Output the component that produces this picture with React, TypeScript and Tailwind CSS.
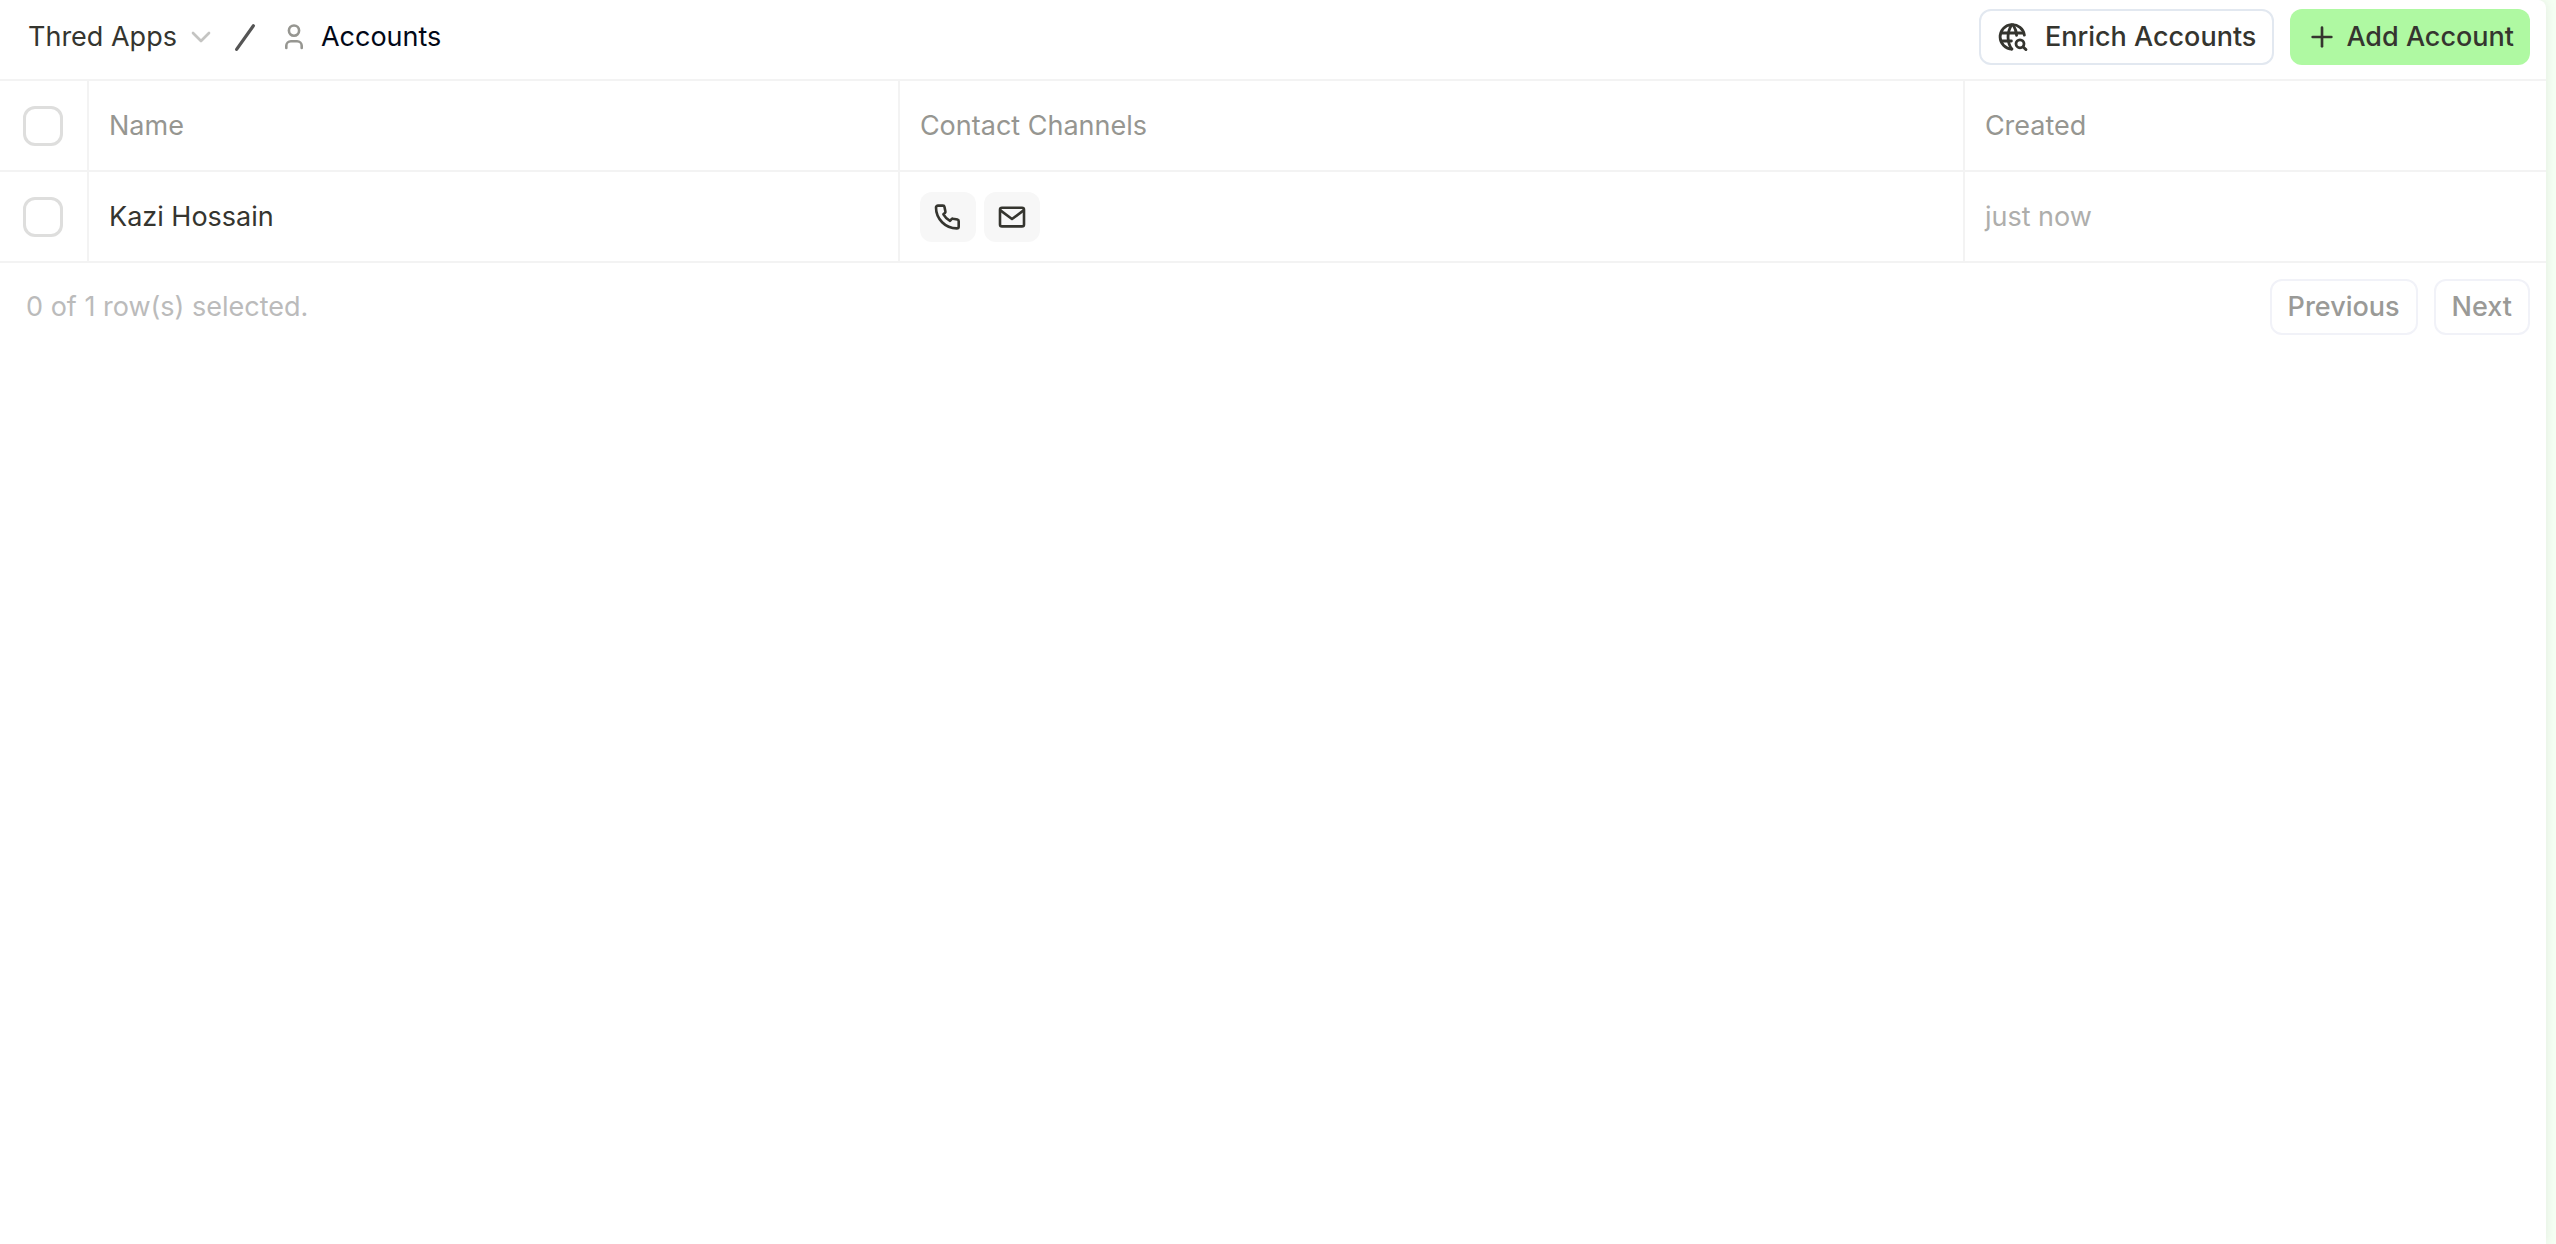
import type { ReactNode } from "react";
import { ChevronDown, Plus } from "lucide-react";

interface Account {
  id: number;
  name: string;
  created: string;
}

const accounts: Account[] = [{ id: 1, name: "Kazi Hossain", created: "just now" }];

export default function App() {
  return (
    <div className="min-h-screen bg-[#f5fff3] pr-[10px] font-['Inter',sans-serif] text-[27px] leading-[40px] text-[#35352f]">
      <main className="min-h-screen rounded-tr-lg bg-white shadow-[0_0_12px_rgba(0,0,0,0.08)]">
        <Header />
        <AccountsTable />
        <Pagination />
      </main>
    </div>
  );
}

function Header() {
  return (
    <header className="flex items-center justify-between pt-[9px] pr-4 pb-[14px] pl-7">
      <nav aria-label="Breadcrumb" className="flex items-center">
        <button type="button" className="flex items-center gap-2">
          Thred Apps
          <ChevronDown className="size-8 text-[#c4c4c2]" strokeWidth={2} />
        </button>
        <SlashIcon />
        <a href="#accounts" className="flex items-center gap-4 text-[#020817]">
          <PersonIcon />
          Accounts
        </a>
      </nav>
      <div className="flex items-center gap-4">
        <button
          type="button"
          className="flex h-14 items-center gap-4 rounded-xl border-2 border-slate-200 px-4 font-medium"
        >
          <GlobeSearchIcon />
          Enrich Accounts
        </button>
        <button
          type="button"
          className="flex h-14 items-center gap-2 rounded-xl bg-[#aff9a2] px-4 font-medium"
        >
          <Plus className="size-8" strokeWidth={2} />
          Add Account
        </button>
      </div>
    </header>
  );
}

function AccountsTable() {
  return (
    <table className="w-full table-fixed border-y-2 border-[#f3f3f3] text-left">
      <thead>
        <tr className="h-[91px] border-b-2 border-[#f3f3f3] text-[#969691]">
          <th className="w-[88px] border-r-2 border-[#f3f3f3] pl-[23px]">
            <Checkbox label="Select all" />
          </th>
          <th className="w-[31.85%] border-r-2 border-[#f3f3f3] px-5 font-normal">Name</th>
          <th className="w-[41.83%] border-r-2 border-[#f3f3f3] px-5 font-normal">
            Contact Channels
          </th>
          <th className="px-5 font-normal">Created</th>
        </tr>
      </thead>
      <tbody>
        {accounts.map((account) => (
          <tr key={account.id} className="h-[91px]">
            <td className="border-r-2 border-[#f3f3f3] pl-[23px]">
              <Checkbox label={`Select ${account.name}`} />
            </td>
            <td className="border-r-2 border-[#f3f3f3] px-5">{account.name}</td>
            <td className="border-r-2 border-[#f3f3f3] px-5">
              <div className="flex gap-2">
                <ChannelButton label="Phone">
                  <PhoneIcon />
                </ChannelButton>
                <ChannelButton label="Email">
                  <MailIcon />
                </ChannelButton>
              </div>
            </td>
            <td className="px-5 text-[#aeaeac]">{account.created}</td>
          </tr>
        ))}
      </tbody>
    </table>
  );
}

function Pagination() {
  return (
    <footer className="flex items-center justify-between py-4 pr-4 pl-[26px]">
      <p className="text-[#bbbbbb]">0 of {accounts.length} row(s) selected.</p>
      <div className="flex gap-4">
        <PageButton>Previous</PageButton>
        <PageButton>Next</PageButton>
      </div>
    </footer>
  );
}

function Checkbox({ label }: { label: string }) {
  return (
    <input
      type="checkbox"
      aria-label={label}
      className="block size-10 appearance-none rounded-xl border-3 border-[#dededd] bg-white checked:bg-[#aff9a2]"
    />
  );
}

function ChannelButton({ label, children }: { label: string; children: ReactNode }) {
  return (
    <button
      type="button"
      aria-label={label}
      className="flex h-[50px] w-14 items-center justify-center rounded-xl bg-[#f7f7f7]"
    >
      {children}
    </button>
  );
}

function PageButton({ children }: { children: ReactNode }) {
  return (
    <button
      type="button"
      disabled
      className="h-14 rounded-xl border-2 border-[#f1f2f8] px-4 font-medium text-[#9a9a97]"
    >
      {children}
    </button>
  );
}

// ---------------------------------------------------------------------------

function SlashIcon() {
  return (
    <svg viewBox="0 0 24 32" className="mr-6 ml-4 h-8 w-6" fill="none" stroke="#555555" strokeWidth={3.2} strokeLinecap="round">
      <path d="M3.6 28.4 20.4 4.8" />
    </svg>
  );
}

function PersonIcon() {
  return (
    <svg viewBox="0 0 24 32" className="h-8 w-6" fill="none" stroke="#969691" strokeWidth={2.6} strokeLinecap="round">
      <circle cx="13" cy="9.6" r="5.1" />
      <path d="M5.3 27v-2.2a4.6 4.6 0 0 1 4.6-4.6h6.2a4.6 4.6 0 0 1 4.6 4.6V27" />
    </svg>
  );
}

function GlobeSearchIcon() {
  return (
    <svg viewBox="0 0 32 32" className="size-8" fill="none" stroke="currentColor" strokeWidth={2.8} strokeLinecap="round" strokeLinejoin="round">
      <path d="M27.4 14.2A12.2 12.2 0 1 0 15 28" />
      <path d="M4.4 12h22.4M4.4 20h10" />
      <path d="M14.6 4a22 22 0 0 0 0 24M16.2 4a22 22 0 0 1 3.4 10.4" />
      <circle cx="23" cy="22.8" r="4" />
      <path d="m26.2 26 2.8 2.6" />
    </svg>
  );
}

function PhoneIcon() {
  return (
    <svg viewBox="0 0 32 32" className="size-8" fill="none" stroke="currentColor" strokeWidth={2.6} strokeLinejoin="round">
      <path d="M4 6.6a2 2 0 0 1 2-2h4.9a1.6 1.6 0 0 1 1.6 1.3l.9 4.6a1.6 1.6 0 0 1-.5 1.5l-1.5 1.3a17 17 0 0 0 6.6 6.5l1.6-1.7a1.6 1.6 0 0 1 1.5-.4l4.3.9a1.6 1.6 0 0 1 1.3 1.6v5.2a2 2 0 0 1-2 2C13.4 27.4 4 18 4 6.6z" />
    </svg>
  );
}

function MailIcon() {
  return (
    <svg viewBox="0 0 32 32" className="size-8" fill="none" stroke="currentColor" strokeWidth={2.6} strokeLinejoin="round">
      <rect x="4" y="6.8" width="24" height="18.6" rx="2" />
      <path d="m4.4 9.4 11.6 8.6 11.6-8.6" />
    </svg>
  );
}
